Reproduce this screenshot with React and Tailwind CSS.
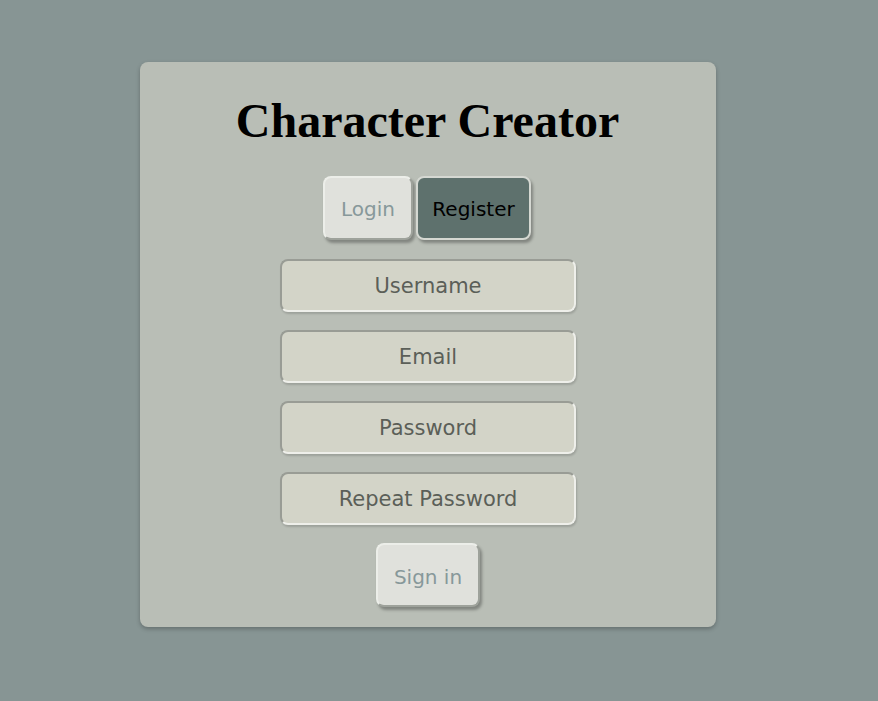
export default function App() {
  const fields = ['Username', 'Email', 'Password', 'Repeat Password'];

  return (
    <div className="min-h-[701px] w-full bg-[#879594] pt-[62px] [font-family:'DejaVu_Sans',sans-serif]">
      <div className="ml-[140px] w-[576px] h-[565px] rounded-lg bg-[#b9beb6] shadow-[0_2px_4px_rgba(0,0,0,0.25)] flex flex-col items-center pt-[27px]">
        <h1 className="text-[48px] leading-[64px] font-bold text-black [font-family:'Liberation_Serif',serif] pr-[1px]">
          Character Creator
        </h1>
        <div className="flex gap-[3px] mt-[23px] pr-[2px]">
          <button className="w-[90px] h-[64px] pt-[2px] rounded-lg bg-[#e0e1dc] text-[#87989a] text-[20px] border-2 border-t-[#eceee9] border-l-[#eceee9] border-r-[#9ea29b] border-b-[#9ea29b] shadow-[2px_3px_3px_rgba(0,0,0,0.3)]">
            Login
          </button>
          <button className="w-[115px] h-[64px] pt-[2px] rounded-lg bg-[#5e716d] text-black text-[20px] border-2 border-[#d5d8d2] shadow-[2px_3px_3px_rgba(0,0,0,0.3)]">
            Register
          </button>
        </div>
        <div className="flex flex-col gap-[18px] mt-[19px]">
          {fields.map(f => (
            <div
              key={f}
              className="w-[296px] h-[53px] pt-[2px] rounded-lg bg-[#d3d4c8] border-2 border-t-[#999c95] border-l-[#999c95] border-r-[#eeefea] border-b-[#eeefea] shadow-[1px_2px_2px_rgba(0,0,0,0.15)] flex items-center justify-center text-[21px] text-[#5b5f58]"
            >
              {f}
            </div>
          ))}
        </div>
        <button className="mt-[18px] w-[104px] h-[64px] pt-[3px] rounded-lg bg-[#e0e1dc] text-[#87989a] text-[20px] border-2 border-t-[#eceee9] border-l-[#eceee9] border-r-[#9ea29b] border-b-[#9ea29b] shadow-[2px_3px_3px_rgba(0,0,0,0.3)]">
          Sign in
        </button>
      </div>
    </div>
  );
}
